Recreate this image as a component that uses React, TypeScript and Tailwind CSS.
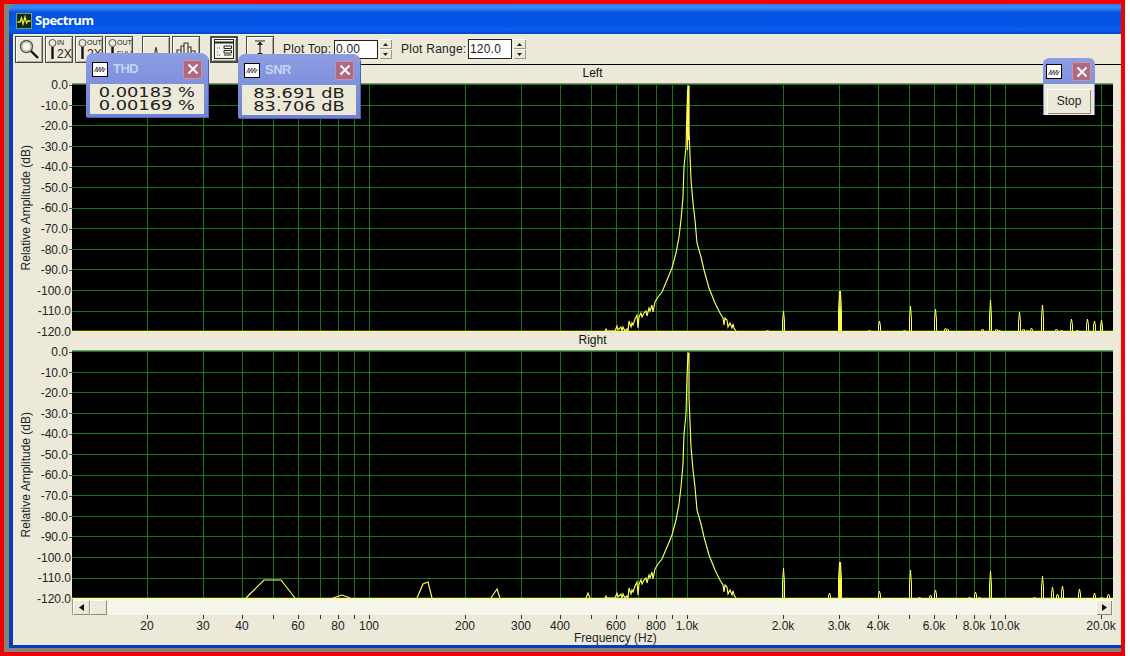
import type { ReactNode } from 'react';

const UI_FONT = 'font-["Liberation_Sans",Arial,sans-serif]';

// plot geometry, in page pixels
const PLOT_LEFT = 72;
const PLOT_WIDTH = 1041;
const PLOT_HEIGHT = 248;

const freqX = (f: number) => 687 + 318 * Math.log10(f / 1000);

const GRID_FREQS = [
  20, 30, 40, 50, 60, 70, 80, 90, 100, 200, 300, 400, 500, 600, 700, 800, 900, 1000, 2000, 3000,
  4000, 5000, 6000, 7000, 8000, 9000, 10000, 20000,
];

const AMP_LABELS = [
  '0.0', '-10.0', '-20.0', '-30.0', '-40.0', '-50.0', '-60.0', '-70.0', '-80.0', '-90.0', '-100.0',
  '-110.0', '-120.0',
];

const FREQ_LABELS: [number, string][] = [
  [20, '20'], [30, '30'], [40, '40'], [60, '60'], [80, '80'], [100, '100'], [200, '200'], [300, '300'],
  [400, '400'], [600, '600'], [800, '800'], [1000, '1.0k'], [2000, '2.0k'], [3000, '3.0k'], [4000, '4.0k'],
  [6000, '6.0k'], [8000, '8.0k'], [10000, '10.0k'], [20000, '20.0k'],
];

// main 1 kHz peak, traced from the left channel
const PEAK: [number, number][] = [
  [605, 331], [606, 329], [607, 331], [615, 331], [617, 326], [618, 330], [621, 327], [622, 331], [623, 327], [625, 331], [627, 329], [628, 331],
  [629, 321], [631, 327], [632, 323], [633, 325], [635, 319], [637, 315], [638, 328], [639, 317], [641, 313], [642, 317], [644, 313],
  [646, 311], [647, 316], [649, 308], [650, 311], [652, 305], [653, 312], [655, 302], [658, 297], [662, 292], [667, 280], [672, 268],
  [676, 253], [679, 237], [681, 220], [683, 197], [684, 167], [686, 147], [687, 110], [688, 86], [689, 86], [689, 130], [691, 180],
  [693, 203], [695, 220], [697, 243], [701, 257], [704, 270], [709, 288], [715, 303], [720, 313], [723, 318], [724, 325], [725, 318],
  [727, 320], [728, 327], [730, 323], [732, 328], [733, 324], [734, 328], [736, 331],
];

// [x, top y]
const LEFT_SPIKES: [number, number][] = [
  [783, 311], [839, 291], [840, 291], [869, 330], [879, 321], [904, 330], [910, 306], [935, 309], [945, 328], [947, 329],
  [982, 329], [990, 300], [996, 329], [999, 330], [1019, 312], [1023, 329], [1027, 330], [1031, 328], [1042, 305], [1056, 329], [1061, 330],
  [1071, 319], [1077, 330], [1087, 319], [1094, 321], [1101, 320], [767, 330],
];

const RIGHT_SPIKES: [number, number][] = [
  [783, 568], [829, 593], [839, 562], [840, 562], [879, 591], [910, 570], [919, 597], [930, 595], [935, 590], [969, 597],
  [975, 592], [979, 597], [990, 571], [1034, 597], [1042, 576], [1052, 587], [1057, 594], [1062, 586], [1079, 589], [1094, 593], [1101, 597], [1108, 594],
];

const RIGHT_HUMPS = [
  '246,598 252,592 264,580 281,580 295,598',
  '333,598 342,595 350,598',
  '417,598 423,584 428,582 432,598',
  '491,598 497,589 500,598',
  '586,598 588,593 590,598',
];

function spikePath([x, top]: [number, number], base: number) {
  const mid = Math.round(top + (base - top) * 0.5);
  return `M${x - 0.5} ${base}V${mid}L${x + 0.5} ${top}L${x + 1.5} ${mid}V${base}`;
}

function SpectrumPlot({
  top,
  spikes,
  humps = [],
}: {
  top: number;
  spikes: [number, number][];
  humps?: string[];
}) {
  const base = top + 247;
  const shift = top - 84;
  return (
    <svg
      width={PLOT_WIDTH}
      height={PLOT_HEIGHT}
      viewBox={`${PLOT_LEFT} ${top} ${PLOT_WIDTH} ${PLOT_HEIGHT}`}
      className="block bg-black"
    >
      <g stroke="#127a12" strokeWidth="1" shapeRendering="crispEdges">
        {AMP_LABELS.map((_, i) => {
          const y = top + Math.round(i * 20.6) + 0.5;
          return <line key={i} x1={PLOT_LEFT} x2={PLOT_LEFT + PLOT_WIDTH} y1={y} y2={y} />;
        })}
        {GRID_FREQS.map((f) => {
          const x = Math.round(freqX(f)) + 0.5;
          return <line key={f} x1={x} x2={x} y1={top} y2={base} />;
        })}
      </g>
      <g fill="none" stroke="#ffff50" strokeWidth="1.15">
        <polyline points={PEAK.map(([x, y]) => `${x},${y + shift}`).join(' ')} />
        <path d="M687.5 90V150M688.5 86V140" strokeWidth="1.2" />
        {spikes.map((s) => (
          <path key={s[0]} d={spikePath(s, base)} strokeWidth="1" />
        ))}
        {humps.map((p) => (
          <polyline key={p} points={p} />
        ))}
      </g>
      <line x1={PLOT_LEFT} x2={PLOT_LEFT + PLOT_WIDTH} y1={base + 0.5} y2={base + 0.5} stroke="#ffff66" strokeWidth="1.5" />
    </svg>
  );
}

function PlotPanel({ title, children }: { title: string; children: ReactNode }) {
  return (
    <>
      <div className="flex h-[19px]">
        <div className="w-[59px]" />
        <div className="w-[1041px] border-b border-[#8d8f7c] text-center text-[12px] leading-[17px] text-[#111]">{title}</div>
      </div>
      <div className="flex h-[248px]">
        <div className="flex w-[26px] items-center justify-center">
          <span className="rotate-180 whitespace-nowrap text-[12px] leading-[14px] text-[#222] [writing-mode:vertical-rl]">
            Relative Amplitude (dB)
          </span>
        </div>
        <div className="-mt-[6px] flex h-[261px] w-[33px] flex-col justify-between">
          {AMP_LABELS.map((label) => (
            <div key={label} className="flex h-[14px] items-center justify-end gap-[1px] text-[12px] leading-[14px] text-[#222]">
              {label}
              <span className="h-px w-[3px] bg-[#555]" />
            </div>
          ))}
        </div>
        {children}
      </div>
    </>
  );
}

function Spinner() {
  const cell = 'flex h-[10px] w-[13px] items-center justify-center bg-[#ece9d8] shadow-[inset_1px_1px_0_#fff,inset_-1px_-1px_0_#9a9788]';
  return (
    <div className="ml-[1px] flex flex-col">
      <div className={cell}>
        <svg width="5" height="3"><path d="M2.5 0L5 3H0z" fill="#222" /></svg>
      </div>
      <div className={cell}>
        <svg width="5" height="3"><path d="M0 0H5L2.5 3z" fill="#222" /></svg>
      </div>
    </div>
  );
}

function ToolButton({ children, className = '' }: { children: ReactNode; className?: string }) {
  return (
    <div
      className={`flex h-[27px] w-[28px] items-center justify-center overflow-hidden border border-[#4a4a44] bg-[#ece9d8] shadow-[inset_1px_1px_0_#fff,inset_-1px_-1px_0_#aca899] ${className}`}
    >
      {children}
    </div>
  );
}

function ZoomButton({ top, bottom, bottomClass }: { top: string; bottom: string; bottomClass: string }) {
  return (
    <ToolButton>
      <div className="flex w-full items-start pl-[2px] pt-[1px]">
        <svg width="9" height="23" viewBox="0 0 9 23" className="shrink-0">
          <circle cx="4.5" cy="5" r="3.5" fill="none" stroke="#555" strokeWidth="1" />
          <path d="M4.5 9V21" stroke="#111" strokeWidth="2.4" />
        </svg>
        <div className="flex flex-col items-start text-[#222]">
          <span className="text-[7px] leading-[10px]">{top}</span>
          <span className={`whitespace-nowrap ${bottomClass}`}>{bottom}</span>
        </div>
      </div>
    </ToolButton>
  );
}

function PopupIcon() {
  return (
    <div className="flex h-[15px] w-[16px] items-center justify-center border border-black bg-white">
      <svg width="12" height="8" viewBox="0 0 12 8">
        <path d="M0.5 7L3 2V7L6 2V7L9 2V7L11.5 3" fill="none" stroke="#444" strokeWidth="0.9" />
      </svg>
    </div>
  );
}

function PopupClose() {
  return (
    <div className="flex h-[19px] w-[19px] items-center justify-center rounded-[2px] bg-[#b0697f] shadow-[inset_0_0_0_1px_#c895a6]">
      <svg width="12" height="12" viewBox="0 0 12 12">
        <path d="M1.5 1.5L10.5 10.5M10.5 1.5L1.5 10.5" stroke="#fff" strokeWidth="2" />
      </svg>
    </div>
  );
}

function MeterPopup({ title, rows, className }: { title: string; rows: string[]; className: string }) {
  return (
    <div className={`absolute flex h-[64px] w-[122px] flex-col rounded-t-[7px] bg-gradient-to-b from-[#8c9de2] to-[#6f84d4] shadow-[1px_1px_0_#4b5fae] ${className}`}>
      <div className="flex h-[31px] items-center px-[6px] pt-[1px]">
        <PopupIcon />
        <span className="ml-[5px] flex-1 text-[13px] font-bold tracking-[-0.5px] text-[#c5d2f5]">{title}</span>
        <PopupClose />
      </div>
      <div className="mx-[4px] flex h-[30px] flex-col items-center justify-center bg-[#ece9d8] font-['DejaVu_Sans',sans-serif] text-[14px] leading-[13px] text-[#222]">
        {rows.map((row) => (
          <div key={row} className="scale-x-[1.27] whitespace-nowrap">{row}</div>
        ))}
      </div>
    </div>
  );
}

export default function App() {
  return (
    <div className={`h-[656px] w-[1130px] overflow-hidden bg-white ${UI_FONT}`}>
      <div className="relative h-[656px] w-[1125px] border-4 border-[#f00000] bg-[#85847c] pb-[4px] pl-[5px]">
        <div className="flex h-full flex-col">
          {/* Title bar */}
          <div className="flex h-[30px] shrink-0 items-center rounded-tl-[7px] bg-[linear-gradient(to_bottom,#2f7cf0_0%,#3b8af5_12%,#0a52de_28%,#0054e8_70%,#0a5ef0_88%,#0046c8_100%)] pl-[7px] pt-[3px]">
            <svg width="16" height="16" viewBox="0 0 16 16">
              <rect width="16" height="16" fill="#0c2b1a" />
              <rect x="0.5" y="0.5" width="15" height="15" fill="none" stroke="#7f9a78" />
              <path d="M1.5 9H4L5.5 5L7 11L9 4L10.5 10L12 8H14.5" fill="none" stroke="#e8e83a" strokeWidth="1.3" />
            </svg>
            <span className="ml-[3px] font-['Open_Sans',sans-serif] text-[13px] font-bold tracking-[-0.5px] text-white">Spectrum</span>
          </div>

          <div className="flex min-h-0 flex-1 flex-col border-b-[3px] border-l-4 border-b-[#0a3cb8] border-l-[#0a3cb8] bg-[#ece9d8]">
            {/* Toolbar */}
            <div className="flex h-[30px] shrink-0 items-center pl-[2px] text-[12px] text-[#222]">
              <div className="flex gap-[2px]">
                <ToolButton>
                  <svg width="24" height="24" viewBox="0 0 24 24">
                    <circle cx="9.5" cy="9.5" r="6" fill="#f6f5ee" stroke="#555" strokeWidth="1.5" />
                    <circle cx="9.5" cy="9.5" r="4.4" fill="none" stroke="#aaa" strokeWidth="1" />
                    <path d="M14 14L21 21" stroke="#111" strokeWidth="2.4" />
                  </svg>
                </ToolButton>
                <ZoomButton top="IN" bottom="2X" bottomClass="text-[12px] leading-[12px]" />
                <ZoomButton top="OUT" bottom="2X" bottomClass="text-[12px] leading-[12px]" />
                <ZoomButton top="OUT" bottom="FULL" bottomClass="text-[7px] leading-[12px]" />
              </div>
              <div className="ml-[9px] flex gap-[2px]">
                <ToolButton className="bg-[#e6e2d2]">
                  <svg width="22" height="22" viewBox="0 0 22 22">
                    <path d="M4 19H9L11 9L13 19H18" fill="none" stroke="#333" strokeWidth="1.1" />
                  </svg>
                </ToolButton>
                <ToolButton>
                  <svg width="22" height="22" viewBox="0 0 22 22">
                    <path d="M2 20V12H6V8H9V5H13V9H16V13H20V20M6 12V20M9 8V20M13 9V20M16 13V20" fill="none" stroke="#333" strokeWidth="1.1" />
                  </svg>
                </ToolButton>
              </div>
              <ToolButton className="ml-[10px] border-2">
                <svg width="22" height="22" viewBox="0 0 22 22">
                  <rect x="1.5" y="1.5" width="19" height="19" fill="#f6f5ee" stroke="#222" />
                  <path d="M2 4.5H20" stroke="#222" strokeWidth="2" />
                  <path d="M11 8H18.5V10.5H11zM11 12.5H18.5V15H11zM11 17H18.5" fill="none" stroke="#222" />
                  <path d="M4 10H8M4 14H6M4 17H8" stroke="#555" strokeDasharray="1 1" />
                </svg>
              </ToolButton>
              <ToolButton className="ml-[8px]">
                <svg width="20" height="24" viewBox="0 0 20 24">
                  <path d="M5 4H15M5 20H15M10 5V19" stroke="#222" strokeWidth="1.2" />
                  <path d="M7 8L10 4.5L13 8zM7 16L10 19.5L13 16z" fill="#222" />
                </svg>
              </ToolButton>

              <span className="ml-[9px] w-[51px] whitespace-nowrap tracking-[0.2px]">Plot Top:</span>
              <div className="flex h-[19px] w-[44px] items-center border border-[#222] bg-white pl-[1px] text-[12px] tracking-[0.2px]">0.00</div>
              <Spinner />
              <span className="ml-[9px] w-[67px] whitespace-nowrap tracking-[0.25px]">Plot Range:</span>
              <div className="flex h-[20px] w-[44px] items-center border border-[#222] bg-white pl-[1px] text-[12px] tracking-[0.2px]">120.0</div>
              <Spinner />
            </div>
            <div className="ml-[345px] h-px shrink-0 bg-black" />

            <PlotPanel title="Left">
              <SpectrumPlot top={84} spikes={LEFT_SPIKES} />
            </PlotPanel>
            <PlotPanel title="Right">
              <SpectrumPlot top={351} spikes={RIGHT_SPIKES} humps={RIGHT_HUMPS} />
            </PlotPanel>

            {/* Horizontal scrollbar */}
            <div className="ml-[59px] flex h-[16px] w-[1041px] shrink-0 items-center border-l border-[#9a9788] bg-[#f6f5ec] pr-[1px]">
              <div className="flex h-[15px] w-[17px] items-center justify-center bg-[#ece9d8] shadow-[inset_1px_1px_0_#fff,inset_-1px_-1px_0_#8d8b7c]">
                <svg width="5" height="7"><path d="M5 0V7L0 3.5z" fill="#111" /></svg>
              </div>
              <div className="h-[15px] w-[17px] bg-[#ece9d8] shadow-[inset_1px_1px_0_#fff,inset_-1px_-1px_0_#8d8b7c]" />
              <div className="flex-1" />
              <div className="flex h-[15px] w-[16px] items-center justify-center bg-[#ece9d8] shadow-[inset_1px_1px_0_#fff,inset_-1px_-1px_0_#8d8b7c]">
                <svg width="5" height="7"><path d="M0 0V7L5 3.5z" fill="#111" /></svg>
              </div>
            </div>

            {/* Frequency axis */}
            <div className="relative flex-1">
              <svg width={PLOT_WIDTH} height="5" viewBox={`${PLOT_LEFT} 0 ${PLOT_WIDTH} 5`} className="ml-[59px] block">
                {GRID_FREQS.map((f) => {
                  const x = Math.round(freqX(f)) + 0.5;
                  return <line key={f} x1={x} x2={x} y1="0" y2="4" stroke="#333" shapeRendering="crispEdges" />;
                })}
              </svg>
              {FREQ_LABELS.map(([f, label]) => (
                <span
                  key={label}
                  className="absolute top-[4px] -translate-x-1/2 whitespace-nowrap text-[12px] leading-[14px] text-[#222]"
                  style={{ left: Math.round(freqX(f)) - 13 }}
                >
                  {label}
                </span>
              ))}
              <span className="absolute left-[561px] top-[16px] whitespace-nowrap text-[12px] leading-[14px] text-[#222]">Frequency (Hz)</span>
            </div>
          </div>
        </div>
      </div>

      {/* Floating meter windows */}
      <MeterPopup title="THD" rows={['0.00183 %', '0.00169 %']} className="left-[86px] top-[53px]" />
      <MeterPopup title="SNR" rows={['83.691 dB', '83.706 dB']} className="left-[238px] top-[54px]" />
      <div className="absolute left-[1043px] top-[58px] flex h-[57px] w-[52px] flex-col rounded-t-[6px] bg-gradient-to-b from-[#8c9de2] to-[#6f84d4]">
        <div className="flex h-[26px] items-center justify-between pl-[3px] pr-[4px] pt-[1px]">
          <PopupIcon />
          <PopupClose />
        </div>
        <div className="mx-[1px] flex flex-1 items-center justify-center bg-[#ece9d8] pt-[3px]">
          <div className="flex h-[25px] w-[44px] items-center justify-center bg-[#ece9d8] text-[12px] text-[#222] shadow-[inset_1px_1px_0_#fff,inset_-1px_-1px_0_#8d8b7c]">Stop</div>
        </div>
      </div>
    </div>
  );
}
